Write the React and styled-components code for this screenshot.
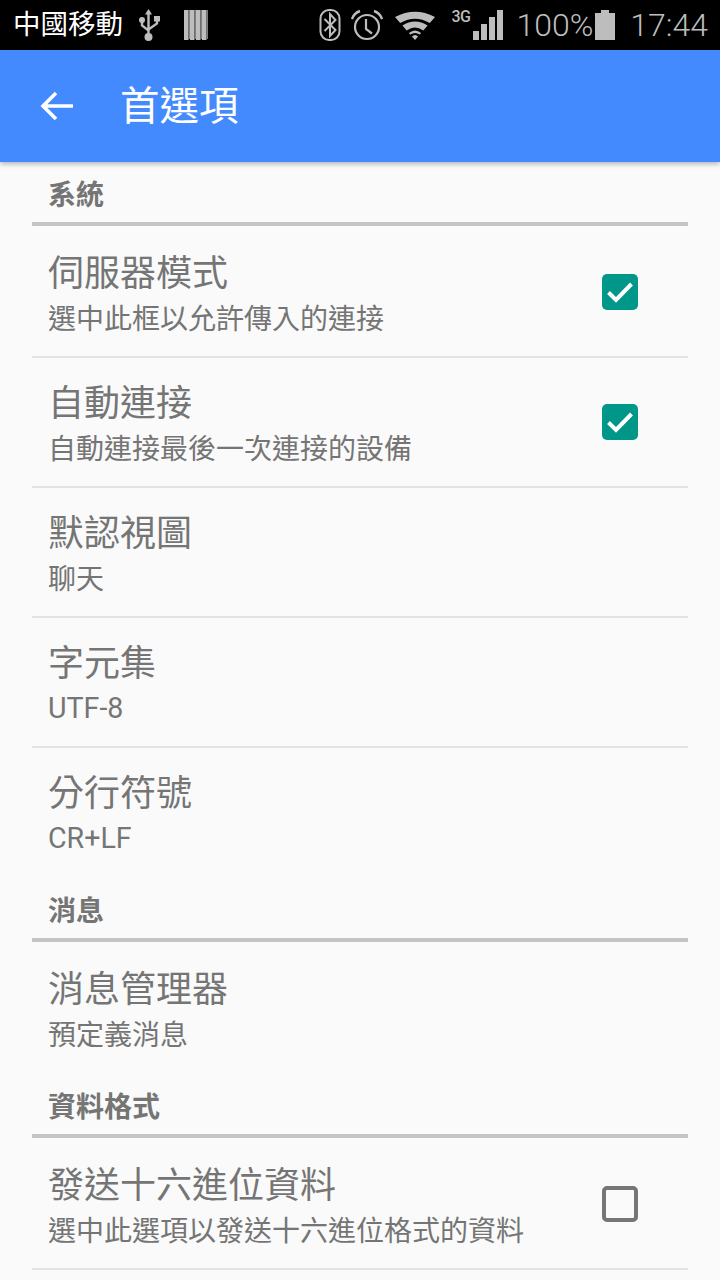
import React from "react";
import styled, { createGlobalStyle } from "styled-components";

const GlobalStyle = createGlobalStyle`
    html, body {
        margin: 0;
        padding: 0;
        background: #fafafa;
    }
    body {
        font-family: Roboto, "Noto Sans CJK TC", sans-serif;
    }
`;

const Page = styled.div`
    width: 720px;
    height: 1280px;
    overflow: hidden;
    display: flex;
    flex-direction: column;
    background: #fafafa;
`;

const StatusBar = styled.div`
    height: 50px;
    flex: none;
    background: #000;
    display: flex;
    align-items: center;
    color: #bdbdbd;
    padding: 0 12px 0 13px;
`;

const Carrier = styled.span`
    font-size: 27.5px;
    line-height: 50px;
    color: #fff;
    margin-right: 16px;
`;

const StatusText = styled.span`
    font-size: 32px;
    font-weight: 300;
    line-height: 50px;
    margin-left: ${(p) => p.$left || 0}px;
    margin-right: ${(p) => p.$right || 0}px;
`;

const NetworkLabel = styled.span`
    width: 20px;
    height: 30px;
    margin-left: 15px;
    font-size: 16px;
    font-weight: 500;
    line-height: 14px;
    letter-spacing: -0.5px;
    white-space: nowrap;
`;

const Spacer = styled.div`
    flex: 1;
`;

const Icon = styled.svg`
    flex: none;
    display: block;
    margin-left: ${(p) => p.$left || 0}px;
`;

const AppBar = styled.header`
    height: 112px;
    flex: none;
    position: relative;
    z-index: 1;
    background: #448aff;
    box-shadow: 0 2px 5px rgba(0, 0, 0, 0.28);
    display: flex;
    align-items: center;
    padding-left: 40px;
    color: #fff;
`;

const AppTitle = styled.h1`
    margin: 2px 0 0 46px;
    font-size: 39.5px;
    font-weight: 400;
    line-height: 112px;
`;

const List = styled.div`
    margin-top: -2px;
    padding: 0 32px;
`;

const SectionHeader = styled.div`
    height: 62px;
    border-bottom: 4px solid #c4c4c4;
    padding: 0 16px;
    font-size: 28px;
    font-weight: 700;
    line-height: 28px;
    color: #757575;
    display: flex;
    align-items: flex-end;
    box-sizing: content-box;
`;

const SectionLabel = styled.span`
    margin-bottom: 12px;
`;

const Row = styled.div`
    height: 128px;
    margin-top: ${(p) => (p.$first ? 2 : 0)}px;
    padding: 0 50px 0 16px;
    border-bottom: ${(p) => (p.$last ? "none" : "2px solid #e2e2e2")};
    display: flex;
    align-items: center;
    justify-content: space-between;
`;

const RowText = styled.div`
    display: flex;
    flex-direction: column;
    padding-top: 6px;
`;

const RowTitle = styled.div`
    font-size: 36px;
    line-height: 50px;
    color: #757575;
`;

const RowSummary = styled.div`
    font-size: ${(p) => (p.$latin ? 28.6 : 28)}px;
    line-height: ${(p) => (p.$latin ? 38 : 42)}px;
    margin-bottom: ${(p) => (p.$latin ? 4 : 0)}px;
    color: #757575;
`;

const CheckBox = styled.div`
    width: 36px;
    height: 36px;
    box-sizing: border-box;
    border-radius: 5px;
    display: flex;
    align-items: center;
    justify-content: center;
    background: ${(p) => (p.$checked ? "#009688" : "transparent")};
    border: ${(p) => (p.$checked ? "none" : "4px solid #757575")};
`;

const UsbIcon = () => (
    <Icon width="22" height="32" viewBox="0 0 22 32" fill="none">
        <path d="M9.500 0 6 5.500h7z" fill="#bdbdbd" />
        <path d="M9.500 4v22M3 13v3.500l6.500 5M18 11v3.500l-8.500 6" stroke="#bdbdbd" strokeWidth="2.400" />
        <circle cx="3" cy="11" r="3" fill="#bdbdbd" />
        <rect x="15" y="7" width="6" height="5.500" fill="#bdbdbd" />
        <circle cx="9.500" cy="28" r="4" fill="#bdbdbd" />
    </Icon>
);

const BarsIcon = () => (
    <Icon width="24" height="30" viewBox="0 0 24 30" $left={23}>
        {[0, 6, 12, 18].map((x) => (
            <g key={x}>
                <rect x={x} y="0" width="4.500" height="30" fill="#bdbdbd" />
                <rect x={x + 4.5} y="0" width="1.500" height="29" fill="#808080" />
            </g>
        ))}
    </Icon>
);

const BluetoothIcon = () => (
    <Icon width="22" height="32" viewBox="0 0 22 32" fill="none">
        <rect x="1.500" y="1" width="19" height="30" rx="8.500" stroke="#bdbdbd" strokeWidth="2" />
        <path d="M5.500 10 16.500 21 11 27V5l5.500 6L5.500 22" stroke="#bdbdbd" strokeWidth="2" />
    </Icon>
);

const AlarmIcon = () => (
    <Icon width="32" height="32" viewBox="0 0 32 32" fill="none" $left={10}>
        <circle cx="16" cy="18" r="12" stroke="#bdbdbd" strokeWidth="2.200" />
        <path d="M15 10v10l6 4.500" stroke="#bdbdbd" strokeWidth="2.200" />
        <path d="M1 10Q3 4 9 2M31 10Q29 4 23 2" stroke="#bdbdbd" strokeWidth="2.400" />
    </Icon>
);

const WifiIcon = () => (
    <Icon width="42" height="30" viewBox="0 0 42 30" fill="#bdbdbd" $left={11}>
        <path d="M1 7Q21 -3.500 41 7L35.800 13Q21 4.500 6.200 13Z" />
        <path d="M8.400 15.500Q21 7.500 33.600 15.500L29.300 20.500Q21 14.500 12.700 20.500Z" />
        <path d="M14.900 23Q21 18 27.100 23L25.800 24.500Q21 21.500 16.200 24.500Z" />
        <path d="M17.900 26.500Q21 23.500 24.100 26.500L21 30Z" />
    </Icon>
);

const SignalBars = () => (
    <Icon width="30" height="30" viewBox="0 0 30 30" $left={2}>
        {[[0, 21], [8, 14], [16, 7], [24, 0]].map(([x, y]) => (
            <rect key={x} x={x} y={y} width="6" height={30 - y} fill="#bdbdbd" />
        ))}
    </Icon>
);

const BatteryIcon = () => (
    <Icon width="20" height="30" viewBox="0 0 20 30">
        <path d="M6 0h8v3h6v27H0V3h6z" fill="#bdbdbd" />
    </Icon>
);

const BackIcon = () => (
    <Icon width="34" height="32" viewBox="0 0 34 32" fill="none">
        <path d="M33 16H3M16 3 3 16l13 13" stroke="#fff" strokeWidth="3.600" />
    </Icon>
);

const Check = ({ checked }) => (
    <CheckBox $checked={checked}>
        {checked && (
            <svg width="28" height="22" viewBox="0 0 28 22" fill="none">
                <path d="M2.500 11.500 10 19 25.500 3" stroke="#fff" strokeWidth="4" />
            </svg>
        )}
    </CheckBox>
);

const Pref = ({ title, summary, checkbox, first, last, latin }) => (
    <Row $first={first} $last={last}>
        <RowText>
            <RowTitle>{title}</RowTitle>
            <RowSummary $latin={latin}>{summary}</RowSummary>
        </RowText>
        {checkbox !== undefined && <Check checked={checkbox} />}
    </Row>
);

const Section = ({ children }) => (
    <SectionHeader>
        <SectionLabel>{children}</SectionLabel>
    </SectionHeader>
);

export default function App() {
    return (
        <Page>
            <GlobalStyle />
            <StatusBar>
                <Carrier>中國移動</Carrier>
                <UsbIcon />
                <BarsIcon />
                <Spacer />
                <BluetoothIcon />
                <AlarmIcon />
                <WifiIcon />
                <NetworkLabel>3G</NetworkLabel>
                <SignalBars />
                <StatusText $left={13} $right={2}>100%</StatusText>
                <BatteryIcon />
                <StatusText $left={15}>17:44</StatusText>
            </StatusBar>
            <AppBar>
                <BackIcon />
                <AppTitle>首選項</AppTitle>
            </AppBar>
            <List>
                <Section>系統</Section>
                <Pref first title="伺服器模式" summary="選中此框以允許傳入的連接" checkbox={true} />
                <Pref title="自動連接" summary="自動連接最後一次連接的設備" checkbox={true} />
                <Pref title="默認視圖" summary="聊天" />
                <Pref latin title="字元集" summary="UTF-8" />
                <Pref latin last title="分行符號" summary="CR+LF" />
                <Section>消息</Section>
                <Pref first last title="消息管理器" summary="預定義消息" />
                <Section>資料格式</Section>
                <Pref first title="發送十六進位資料" summary="選中此選項以發送十六進位格式的資料" checkbox={false} />
            </List>
        </Page>
    );
}
